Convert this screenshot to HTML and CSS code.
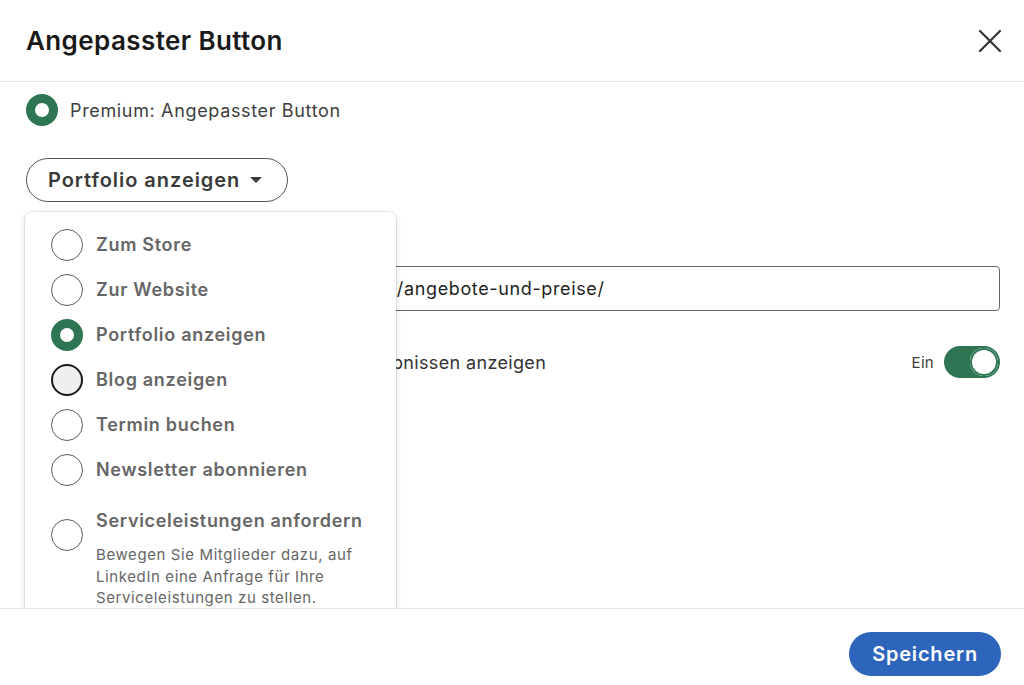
FILE: index.html
```html
<!DOCTYPE html>
<html lang="de">
<head>
<meta charset="utf-8">
<title>Angepasster Button</title>
<link rel="stylesheet" href="styles.css">
</head>
<body>
<div class="modal">
  <header class="modal-header">
    <h1 class="modal-title">Angepasster Button</h1>
    <button class="close-btn" aria-label="Schließen">
      <svg width="24" height="24" viewBox="0 0 24 24"><path d="M2 2 L22 22 M22 2 L2 22" stroke="#333" stroke-width="2.2" stroke-linecap="round" fill="none"/></svg>
    </button>
  </header>
  <main class="modal-body">
    <label class="premium-row">
      <span class="radio radio-on"></span>
      <span class="premium-text">Premium: Angepasster Button</span>
    </label>
    <button class="select-btn">Portfolio anzeigen <span class="caret"></span></button>

    <div class="field">
      <div class="field-label">Button-URL*</div>
      <div class="input">https://www.meine-firmen-webseite.de/angebote-und-preise/</div>
    </div>

    <div class="toggle-row">
      <span class="toggle-label">Den angepassten Button in den Suchergebnissen anzeigen</span>
      <span class="toggle-state">Ein</span>
      <span class="toggle"><span class="knob"></span></span>
    </div>

    <div class="menu">
      <div class="menu-item"><span class="radio"></span><span class="item-text">Zum Store</span></div>
      <div class="menu-item"><span class="radio"></span><span class="item-text">Zur Website</span></div>
      <div class="menu-item"><span class="radio radio-on"></span><span class="item-text">Portfolio anzeigen</span></div>
      <div class="menu-item"><span class="radio radio-hover"></span><span class="item-text">Blog anzeigen</span></div>
      <div class="menu-item"><span class="radio"></span><span class="item-text">Termin buchen</span></div>
      <div class="menu-item"><span class="radio"></span><span class="item-text">Newsletter abonnieren</span></div>
      <div class="menu-item menu-item-desc">
        <span class="radio"></span>
        <div class="item-block">
          <span class="item-text">Serviceleistungen anfordern</span>
          <p class="item-desc">Bewegen Sie Mitglieder dazu, auf LinkedIn eine Anfrage für Ihre Serviceleistungen zu stellen.</p>
        </div>
      </div>
    </div>
  </main>
  <footer class="modal-footer">
    <button class="save-btn">Speichern</button>
  </footer>
</div>
</body>
</html>
```
FILE: styles.css
```css
* { box-sizing: border-box; }
html, body { margin: 0; padding: 0; background: #fff; }
body {
  font-family: Inter, "Liberation Sans", Arial, sans-serif;
  color: #1f1f1f;
  width: 1024px;
  height: 685px;
  overflow: hidden;
}
.modal {
  display: flex;
  flex-direction: column;
  height: 685px;
}
.modal-header {
  height: 82px;
  flex: none;
  display: flex;
  align-items: center;
  justify-content: space-between;
  padding: 0 22px 0 26px;
  border-bottom: 1px solid #e6e6e6;
}
.modal-title {
  margin: 0;
  font-size: 26px;
  font-weight: 600;
  color: #1a1a1a;
  letter-spacing: 0.4px;
}
.close-btn {
  border: 0;
  background: none;
  padding: 0;
  width: 24px;
  height: 24px;
  cursor: pointer;
}
.modal-body {
  position: relative;
  flex: 1;
  overflow: hidden;
  padding: 12px 24px 0 26px;
}
.premium-row {
  display: flex;
  align-items: center;
  gap: 12px;
  height: 32px;
}
.premium-text {
  font-size: 18px;
  letter-spacing: 0.65px;
  color: #404040;
}
.radio {
  width: 32px;
  height: 32px;
  flex: none;
  border-radius: 50%;
  border: 1.5px solid #5e5e5e;
  background: #fff;
}
.radio-on {
  border: 9px solid #2e7653;
}
.radio-hover {
  border: 2px solid #1a1a1a;
  background: #efefef;
}
.select-btn {
  margin-top: 32px;
  height: 44px;
  display: inline-flex;
  align-items: center;
  gap: 10px;
  padding: 0 25px 0 21px;
  border: 1.5px solid #555;
  border-radius: 22px;
  background: #fff;
  font-family: inherit;
  font-size: 20px;
  font-weight: 600;
  letter-spacing: 0.95px;
  color: #3a3a3a;
}
.caret {
  width: 0;
  height: 0;
  border-left: 6px solid transparent;
  border-right: 6px solid transparent;
  border-top: 6px solid #3a3a3a;
  margin-left: 0;
}
.field {
  margin-top: 23px;
}
.field-label {
  font-size: 15px;
  color: #555;
  height: 41px;
  padding-top: 20px;
}
.input {
  height: 45px;
  border: 1px solid #666;
  border-radius: 4px;
  display: flex;
  align-items: center;
  padding: 0 12px;
  font-size: 18px;
  letter-spacing: 0.63px;
  color: #1f1f1f;
  white-space: nowrap;
  overflow: hidden;
}
.toggle-row {
  margin-top: 35px;
  display: flex;
  align-items: center;
  height: 32px;
}
.toggle-label {
  flex: 1;
  font-size: 18px;
  letter-spacing: 0.35px;
  color: #333;
}
.toggle-state {
  font-size: 15px;
  letter-spacing: 0.3px;
  color: #404040;
  margin-right: 10px;
}
.toggle {
  width: 56px;
  height: 32px;
  border-radius: 16px;
  background: #2e7653;
  display: flex;
  align-items: center;
  justify-content: flex-end;
  padding: 2px;
}
.knob {
  width: 28px;
  height: 28px;
  border-radius: 50%;
  background: #fff;
  box-shadow: inset 0 0 0 2px #2e7653, inset 0 0 0 3px #fff;
}
.menu {
  position: absolute;
  top: 130px;
  left: 25px;
  width: 371px;
  height: 420px;
  background: #fff;
  border-radius: 8px 8px 0 0;
  box-shadow: 0 0 0 1px rgba(0,0,0,0.08), 0 2px 6px rgba(0,0,0,0.15);
  padding: 10px 0 0 26px;
}
.menu-item {
  display: flex;
  align-items: center;
  gap: 13px;
  height: 45px;
}
.item-text {
  font-size: 18px;
  font-weight: 600;
  letter-spacing: 0.7px;
  color: #666;
}
.menu-item-desc {
  height: auto;
  margin-top: 18px;
  align-items: flex-start;
}
.menu-item-desc .radio {
  margin-top: 9px;
}
.item-block {
  display: flex;
  flex-direction: column;
  padding-right: 20px;
}
.item-desc {
  margin: 13px 0 0;
  font-size: 15px;
  letter-spacing: 0.6px;
  line-height: 21.5px;
  color: #666;
}
.modal-footer {
  flex: none;
  height: 77px;
  border-top: 1px solid #e6e6e6;
  display: flex;
  align-items: flex-start;
  justify-content: flex-end;
  padding: 23px 23px 0 0;
}
.save-btn {
  height: 44px;
  padding: 0 23px;
  border: 0;
  border-radius: 22px;
  background: #2d64bc;
  color: #fff;
  font-family: inherit;
  font-size: 20px;
  font-weight: 600;
  letter-spacing: 0.8px;
}
```
